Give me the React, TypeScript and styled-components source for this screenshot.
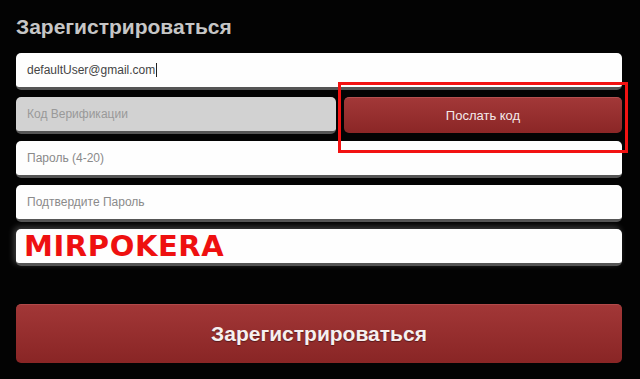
import React from "react";
import styled, { createGlobalStyle } from "styled-components";

const Global = createGlobalStyle`
  html, body { margin: 0; padding: 0; background: #000; }
  body { font-family: "Liberation Sans", Arial, sans-serif; }
`;

const Page = styled.div`
  position: relative;
  width: 640px;
  height: 379px;
  box-sizing: border-box;
  padding: 14px 18px 0 16px;
  background: #030303;
  display: flex;
  flex-direction: column;
`;

const Title = styled.h1`
  margin: 0 0 13px 0;
  font-size: 21px;
  line-height: 26px;
  font-weight: bold;
  color: #c6c6c6;
`;

const Fields = styled.div`
  display: flex;
  flex-direction: column;
  gap: 7px;
`;

const Row = styled.div`
  display: flex;
  gap: 8px;
`;

const Field = styled.div<{ $grey?: boolean; $width?: number }>`
  box-sizing: border-box;
  height: 37px;
  flex: ${(p) => (p.$width ? `0 0 ${p.$width}px` : "1 0 auto")};
  background: ${(p) => (p.$grey ? "#d2d2d2" : "#fefefe")};
  border-radius: 5px;
  border-bottom: 3px solid #555;
  display: flex;
  align-items: center;
  padding-left: 11px;
  font-size: 12px;
  color: ${(p) => (p.$grey ? "#999" : "#8a8a8a")};
`;

const Value = styled.span`
  color: #444;
  border-right: 1px solid #222;
  padding-right: 1px;
`;

const SendButton = styled.button`
  box-sizing: border-box;
  flex: 1;
  height: 36px;
  border: none;
  border-top: 1px solid #b55050;
  border-radius: 5px;
  background: linear-gradient(#a23838, #8b2626);
  color: #f4eaea;
  font-family: "Liberation Sans", Arial, sans-serif;
  font-size: 13px;
  padding: 0;
`;

const Captcha = styled(Field)`
  padding-left: 8px;
  font-family: "DejaVu Sans", Verdana, sans-serif;
  font-weight: bold;
  font-size: 29px;
  color: #ee1010;
  letter-spacing: 0.6px;
  box-shadow: -2px -2px 6px rgba(255, 255, 255, 0.25);
`;

const Submit = styled.button`
  box-sizing: border-box;
  margin-top: 38px;
  height: 59px;
  width: 100%;
  border: none;
  border-top: 1px solid #b24a4a;
  border-radius: 5px;
  background: linear-gradient(#a23737, #892525);
  color: #f6f0f0;
  font-family: "Liberation Sans", Arial, sans-serif;
  font-weight: bold;
  font-size: 21px;
  text-shadow: 0 1px 1px rgba(0, 0, 0, 0.4);
  padding: 0;
`;

const Highlight = styled.div`
  position: absolute;
  left: 338px;
  top: 82px;
  width: 290px;
  height: 71px;
  box-sizing: border-box;
  border: 3px solid #f21212;
  pointer-events: none;
`;

export default function App() {
  return (
    <>
      <Global />
      <Page>
        <Title>Зарегистрироваться</Title>
        <Fields>
          <Field>
            <Value>defaultUser@gmail.com</Value>
          </Field>
          <Row>
            <Field $grey $width={320}>Код Верификации</Field>
            <SendButton>Послать код</SendButton>
          </Row>
          <Field>Пароль (4-20)</Field>
          <Field>Подтвердите Пароль</Field>
          <Captcha>MIRPOKERA</Captcha>
        </Fields>
        <Submit>Зарегистрироваться</Submit>
        <Highlight />
      </Page>
    </>
  );
}
